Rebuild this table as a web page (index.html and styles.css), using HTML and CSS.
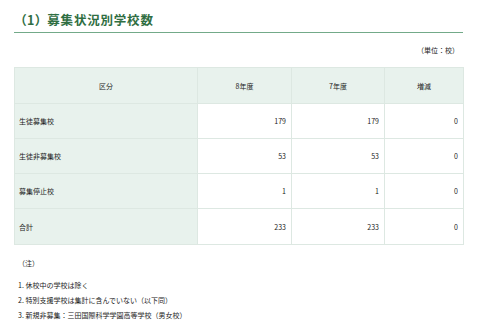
FILE: index.html
```html
<!DOCTYPE html>
<html lang="ja">
<head>
<meta charset="utf-8">
<link rel="stylesheet" href="styles.css">
</head>
<body>
<div class="page">
  <h2 class="title"><span class="num">（1）</span>募集状況別学校数</h2>
  <p class="unit">（単位：校）</p>
  <table class="data">
    <colgroup>
      <col class="c1"><col class="c2"><col class="c3"><col class="c4">
    </colgroup>
    <thead>
      <tr><th>区分</th><th>8年度</th><th>7年度</th><th>増減</th></tr>
    </thead>
    <tbody>
      <tr><th>生徒募集校</th><td>179</td><td>179</td><td>0</td></tr>
      <tr><th>生徒非募集校</th><td>53</td><td>53</td><td>0</td></tr>
      <tr><th>募集停止校</th><td>1</td><td>1</td><td>0</td></tr>
      <tr><th>合計</th><td>233</td><td>233</td><td>0</td></tr>
    </tbody>
  </table>
  <p class="note-head">（注）</p>
  <ol class="notes">
    <li>1. 休校中の学校は除く</li>
    <li>2. 特別支援学校は集計に含んでいない（以下同）</li>
    <li>3. 新規非募集：三田国際科学学園高等学校（男女校）</li>
  </ol>
</div>
</body>
</html>
```

FILE: styles.css
```css
html, body {
  margin: 0;
  padding: 0;
  background: #fff;
}
body {
  font-family: "Noto Sans CJK JP", "Noto Sans", sans-serif;
  color: #222;
}
.page {
  width: 449px;
  margin-left: 14px;
}
.title {
  margin: 0;
  padding: 12px 0 4px 6px;
  font-size: 12.5px;
  line-height: 16px;
  font-weight: bold;
  color: #2f6e42;
  letter-spacing: 0.8px;
  border-bottom: 1px solid #73aa89;
}
.title .num {
  font-feature-settings: "palt";
  margin-right: 5px;
}
.unit {
  margin: 0;
  padding: 12px 4px 0 0;
  text-align: right;
  font-size: 7px;
  line-height: 10px;
}
.data {
  margin-top: 12px;
  width: 449px;
  border-collapse: collapse;
  table-layout: fixed;
  font-size: 7px;
}
.c1 { width: 183px; }
.c2 { width: 94px; }
.c3 { width: 93px; }
.c4 { width: 79px; }
.data th, .data td {
  border: 1px solid #dde8e2;
  height: 34px;
  padding: 0 5px;
  font-weight: normal;
}
.data thead th {
  background: #e8f2ed;
  text-align: center;
  height: 35px;
}
.data tbody th {
  background: #e8f2ed;
  text-align: left;
  padding-left: 4px;
}
.data tbody tr:last-child th,
.data tbody tr:last-child td {
  height: 35px;
}
.data td {
  text-align: right;
  background: #fff;
}
.note-head {
  margin: 13px 0 0 4px;
  font-size: 7px;
  line-height: 10px;
}
.notes {
  list-style: none;
  margin: 12px 0 0 4px;
  padding: 0;
  font-size: 7px;
  line-height: 10px;
}
.notes li {
  margin-bottom: 5px;
}
```
